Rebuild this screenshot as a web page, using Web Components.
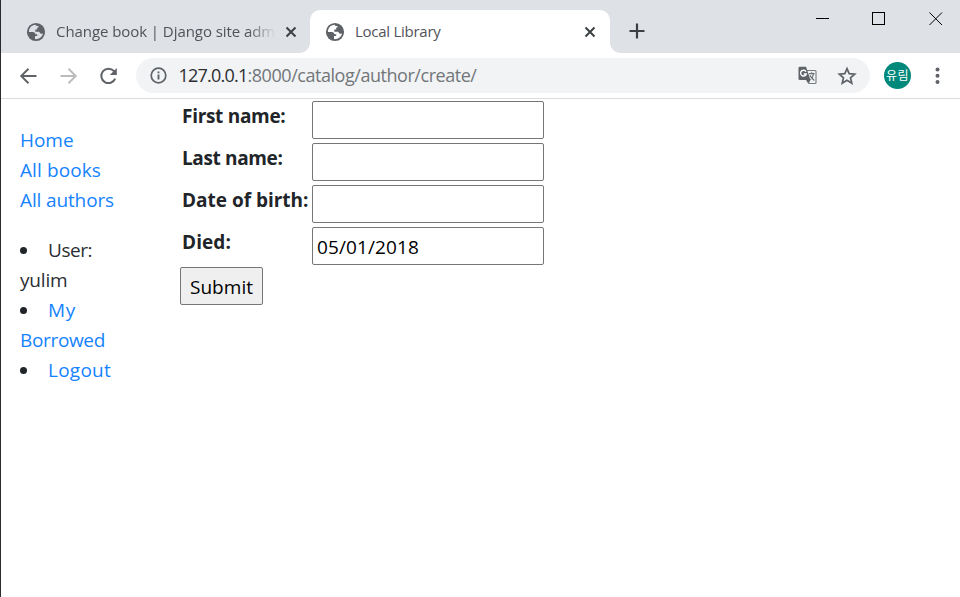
<!DOCTYPE html>
<html lang="en">
<head>
<meta charset="utf-8">
<title>Local Library</title>
<style>
html,body{margin:0;height:100%;overflow:hidden;background:#fff}
body{font-family:"Open Sans","Noto Sans","Noto Sans CJK KR",sans-serif}
</style>
</head>
<body>
<app-window></app-window>
<script>
const define = (name, html, extra) => {
  const t = document.createElement('template');
  t.innerHTML = html;
  customElements.define(name, class extends HTMLElement {
    connectedCallback() {
      if (this.shadowRoot) return;
      this.attachShadow({mode: 'open'}).append(t.content.cloneNode(true));
      if (extra) extra(this, this.shadowRoot);
    }
  });
};

// A single line of text, tracked so that it takes the width given in "w".
define('text-run', `<style>:host{display:inline-block;white-space:pre;vertical-align:top}</style><span><slot></slot></span>`, (el, root) => {
  const span = root.querySelector('span');
  const w = span.getBoundingClientRect().width;
  const n = el.textContent.length;
  const target = +el.getAttribute('w');
  if (w && target) span.style.letterSpacing = ((target - w) / n) + 'px';
});

define('globe-icon', `<style>:host{display:block;width:20px;height:20px}svg{display:block}</style>
<svg width="20" height="20" viewBox="0 0 20 20"><circle cx="10" cy="10" r="9.100" fill="#5f6368"/>
<path d="M9.500 2.800C5.600 3 2.900 6.200 2.900 9.900H7.200Q9.300 10.100 9.500 12.200H11.200V14.100H9V17.100C12.800 17.500 16.300 15 17.100 11.200C16.200 12 15 12 14.300 11.200C13.700 10.300 13.500 9.700 12.300 9.700H9.300V7.500H11.200V5.400H12.500V4C11.500 4.200 9.800 4.100 9.500 2.800Z" fill="var(--land,#dee1e6)"/></svg>`);

define('close-icon', `<style>:host{display:block;width:12px;height:12px}svg{display:block}</style>
<svg width="12" height="12" viewBox="0 0 12 12"><path d="M1.500 1.500L10.500 10.500M10.500 1.500L1.500 10.500" stroke="#3c4043" stroke-width="2"/></svg>`);

define('browser-tab', `<style>
:host{display:flex;align-items:center;height:43px;box-sizing:border-box;position:relative;font-size:15px;line-height:22px;color:#505458}
:host([active]){background:#fff;border-radius:10px 10px 0 0;--land:#fff}
:host([active])::before,:host([active])::after{content:"";position:absolute;bottom:0;width:10px;height:10px}
:host([active])::before{left:-10px;background:radial-gradient(circle at 0 0,transparent 9.500px,#fff 10px)}
:host([active])::after{right:-10px;background:radial-gradient(circle at 100% 0,transparent 9.500px,#fff 10px)}
.t{flex:1;margin:0 10px;overflow:hidden;white-space:nowrap;padding-bottom:2px}
:host(:not([active])) .t{margin-right:9px;-webkit-mask-image:linear-gradient(90deg,#000 calc(100% - 28px),transparent)}
</style><globe-icon></globe-icon><div class="t"><slot></slot></div><close-icon></close-icon>`);

define('window-controls', `<style>:host{display:block;margin-left:auto;width:134px;height:24px;margin-top:6px}svg{display:block}</style>
<svg width="134" height="24" fill="none" stroke="#000" stroke-width="1"><path d="M6 12.500h13"/><rect x="62.500" y="6.500" width="12" height="12"/><path d="M119.500 6.500l12.500 12.500M132 6.500L119.500 19"/></svg>`);

define('tab-strip', `<style>
:host{display:flex;height:53px;background:#dee1e6;box-sizing:border-box;align-items:flex-start}
.a{width:271px;margin:10px 13px 0 25px}
.b{width:300px;box-sizing:border-box;padding:0 14px 0 15px;margin-top:10px}
.p{display:block;margin:23px 0 0 19px}
window-controls{margin-right:16px}
</style>
<browser-tab class="a"><text-run w="232">Change book | Django site admin</text-run></browser-tab>
<browser-tab class="b" active><text-run w="85.500">Local Library</text-run></browser-tab>
<svg class="p" width="16" height="16"><path d="M8 .5v15M.5 8h15" stroke="#3c4043" stroke-width="2.200"/></svg>
<window-controls></window-controls>`);

define('address-bar', `<style>
:host{display:flex;align-items:center;width:734px;height:35px;border-radius:18px;background:#f1f3f4;box-sizing:border-box;padding:0 13px 0 14px;font-size:18px;line-height:26px;color:#72767a}
.u{margin-left:11.500px;flex:1;display:flex;padding-bottom:1px}.h{color:#2c2e31}
svg{display:block}.tr{margin-right:20px}
</style>
<svg width="17" height="17" viewBox="0 0 17 17"><circle cx="8.500" cy="8.500" r="7.300" fill="none" stroke="#5f6368" stroke-width="1.700"/><path d="M8.500 7.500v5M8.500 4.400v1.900" stroke="#5f6368" stroke-width="1.900"/></svg>
<div class="u"><text-run class="h" w="69">127.0.0.1</text-run><text-run w="229">:8000/catalog/author/create/</text-run></div>
<svg class="tr" width="19" height="19" viewBox="0 0 19 19"><path d="M8 4.500H17Q18 4.500 18 5.500V16.500Q18 17.500 17 17.500H11" fill="none" stroke="#777b7e" stroke-width="1.100"/><path d="M1.800 .8H8L12.500 14H1.800Q.5 14 .5 12.700V2Q.5.8 1.800 .8Z" fill="#5f6368"/><path d="M8 14H12.500L10.500 18Z" fill="#5f6368"/><path d="M8 5.600A2.900 2.900 0 1 0 8.300 8H5.700" fill="none" stroke="#fff" stroke-width="1.400"/><path d="M11 7.700H16.600M13.700 6.200V7.700M15.500 8C15 10.700 14 12.400 12.500 13.600M12 9.300C12.800 11.300 14.500 13 16.300 14.500" fill="none" stroke="#6d7175" stroke-width="1.200"/></svg>
<svg width="20" height="20" viewBox="0 0 20 20"><path d="M10 2.600L12.200 7.700L17.700 8.200L13.500 11.800L14.800 17.200L10 14.300L5.200 17.200L6.500 11.800L2.300 8.200L7.800 7.700Z" fill="none" stroke="#5f6368" stroke-width="1.700"/></svg>`);

define('tool-bar', `<style>
:host{display:flex;align-items:center;height:46px;box-sizing:border-box;border-bottom:1px solid #dadce0;padding:0 0 0 18px}
svg{display:block;flex:none}
address-bar{margin-left:17px}
.f{margin-left:21px}.r{margin-left:21px}
.av{width:27px;height:27px;border-radius:50%;background:#00897b;color:#fff;margin-left:14px;font:12px/26px "Noto Sans CJK KR",sans-serif;text-align:center;white-space:nowrap}
.m{margin-left:24px}
</style>
<svg width="19" height="18" viewBox="0 0 19 18" fill="none" stroke="#5f6368" stroke-width="1.900"><path d="M17.500 9H3M9.500 1.800L2.200 9L9.500 16.200"/></svg>
<svg class="f" width="19" height="18" viewBox="0 0 19 18" fill="none" stroke="#babcbe" stroke-width="1.900"><path d="M1.500 9H16M9.500 1.800L16.800 9L9.500 16.200"/></svg>
<svg class="r" width="20" height="20" viewBox="0 0 20 20"><path d="M16.200 12.600A7.200 7.200 0 1 1 15 5.200L16.500 7" fill="none" stroke="#5f6368" stroke-width="2"/><path d="M17.800 2V9H10.800Z" fill="#5f6368"/></svg>
<address-bar></address-bar>
<div class="av"><text-run w="23">유림</text-run></div>
<svg class="m" width="5" height="18" fill="#5f6368"><circle cx="2.500" cy="2.500" r="2"/><circle cx="2.500" cy="8.800" r="2"/><circle cx="2.500" cy="15.100" r="2"/></svg>`);

define('side-nav', `<style>
:host{display:block;width:160px;box-sizing:border-box;padding:26px 0 0 19px;font-size:19px;line-height:30px;color:#2b2f33}
ul{list-style:none;margin:0 0 20px;padding:0}li{display:block}
li>div{height:30px}
.d{display:flex;align-items:center}
.d::before{content:"";width:7px;height:7px;border-radius:50%;background:#212529;margin-right:21px}
a{color:#1583ff;text-decoration:none}
</style>
<ul><li><div><a><text-run w="53.500">Home</text-run></a></div></li><li><div><a><text-run w="81">All books</text-run></a></div></li><li><div><a><text-run w="94">All authors</text-run></a></div></li></ul>
<ul><li><div class="d"><text-run w="44">User:</text-run></div><div><text-run w="47.500">yulim</text-run></div></li>
<li><div class="d"><a><text-run w="28">My</text-run></a></div><div><a><text-run w="85">Borrowed</text-run></a></div></li>
<li><div class="d"><a><text-run w="63">Logout</text-run></a></div></li></ul>`);

define('form-row', `<style>
:host{display:grid;grid-template-columns:130px 232px;height:38px}
.l{font-size:19px;line-height:30px;font-weight:700;color:#212529;white-space:nowrap}
.i{border:1px solid #767676;border-radius:2px;box-sizing:border-box;height:38px;padding:4px 4px;font-size:19px;line-height:30px;color:#000}
</style><div class="l"><slot name="label"></slot></div><div class="i"><slot></slot></div>`);

define('author-form', `<style>
:host{display:flex;flex-direction:column;gap:4px;padding-top:2px;align-items:flex-start}
form-row{margin-left:2px}
.s{box-sizing:border-box;width:83px;height:38px;border:1px solid #767676;border-radius:2px;background:#efefef;font-size:19px;line-height:30px;padding:4px 0 0 9px;color:#000;margin-top:-2px}
</style>
<form-row><text-run slot="label" w="103.500">First name:</text-run></form-row>
<form-row><text-run slot="label" w="100.500">Last name:</text-run></form-row>
<form-row><text-run slot="label" w="126.500">Date of birth:</text-run></form-row>
<form-row><text-run slot="label" w="49">Died:</text-run><text-run w="102">05/01/2018</text-run></form-row>
<div class="s" role="button"><text-run w="63">Submit</text-run></div>`);

define('app-window', `<style>
:host{display:flex;flex-direction:column;width:960px;height:597px;box-sizing:border-box;border-left:1px solid #2b2b2d;background:#fff}
main{display:flex;flex:1}
side-nav{flex:none}author-form{margin-left:19px}
</style><tab-strip></tab-strip><tool-bar></tool-bar><main><side-nav></side-nav><author-form></author-form></main>`);
</script>
</body>
</html>
